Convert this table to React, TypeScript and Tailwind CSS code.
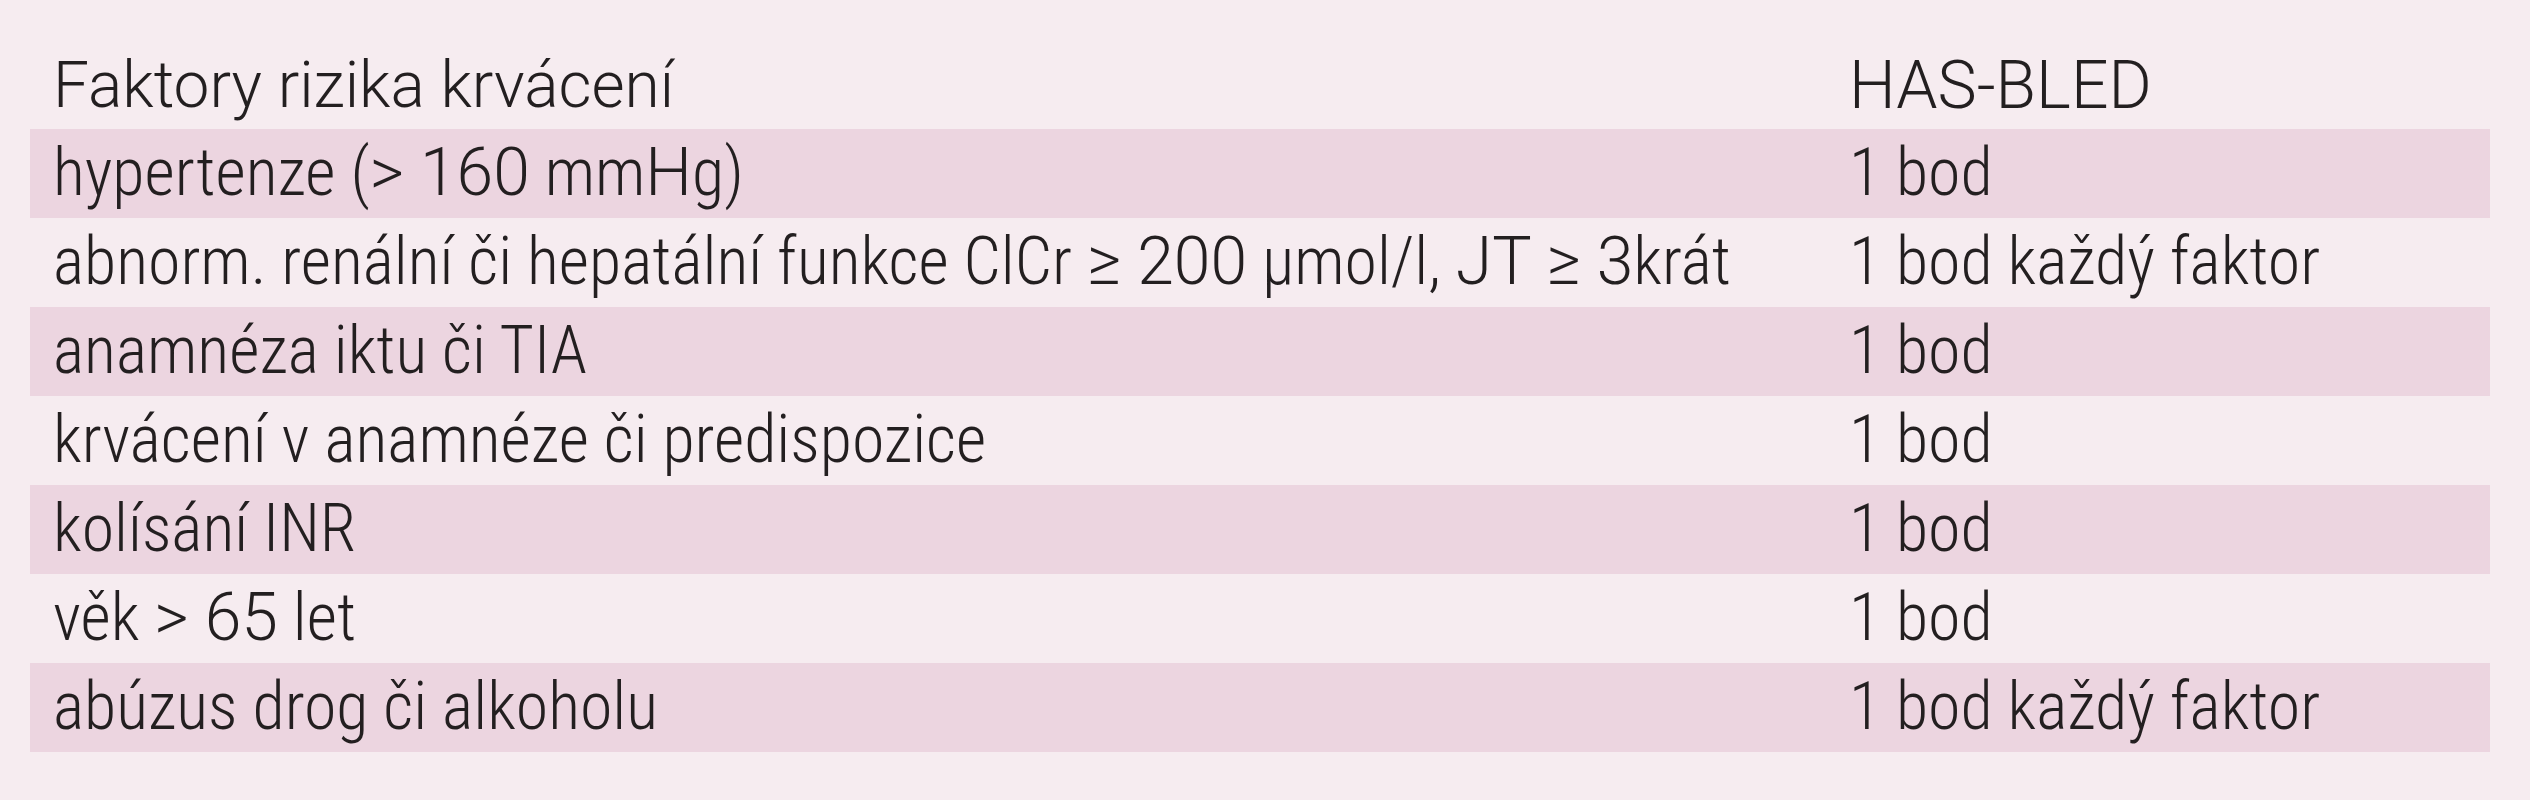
import type { ReactNode } from "react";

const W = ({ children }: { children: ReactNode }) => (
  <span className="font-stretch-[100%]">{children}</span>
);

const rows: [ReactNode, string][] = [
  [<>hypertenze (<W>&gt; 160</W> mm<W>H</W>g)</>, "1 bod"],
  [
    <>
      abnorm. renální či hepatální funkce ClCr <W>≥ 200</W> μmol/l, <W>JT ≥ 3</W>krát
    </>,
    "1 bod každý faktor",
  ],
  [<>anamnéza iktu či TIA</>, "1 bod"],
  [<>krvácení v anamnéze či predispozice</>, "1 bod"],
  [<>kolísání INR</>, "1 bod"],
  [<>věk <W>&gt; 65</W> let</>, "1 bod"],
  [<>abúzus drog či alkoholu</>, "1 bod každý faktor"],
];

export default function App() {
  return (
    <div className="h-[800px] w-[2530px] bg-[#f6ecf0] pl-[30px] pr-[40px] font-['Roboto',sans-serif] font-light font-stretch-[83%] text-[66px] text-[#231f20]">
      <div className="grid h-[129px] grid-cols-[1819px_1fr] pt-[42px] font-[350] leading-[87px]">
        <div className="whitespace-nowrap pl-[23px] text-[64px] font-stretch-[90%]">Faktory rizika krvácení</div>
        <div className="whitespace-nowrap font-stretch-[100%]">HAS-BLED</div>
      </div>
      {rows.map(([a, b], i) => (
        <div
          key={i}
          className={
            i % 2 === 0
              ? "grid h-[89px] grid-cols-[1819px_1fr] bg-[#ecd5e0] leading-[87px]"
              : "grid h-[89px] grid-cols-[1819px_1fr] leading-[87px]"
          }
        >
          <div className="whitespace-nowrap pl-[23px]">{a}</div>
          <div className="whitespace-nowrap">{b}</div>
        </div>
      ))}
    </div>
  );
}
